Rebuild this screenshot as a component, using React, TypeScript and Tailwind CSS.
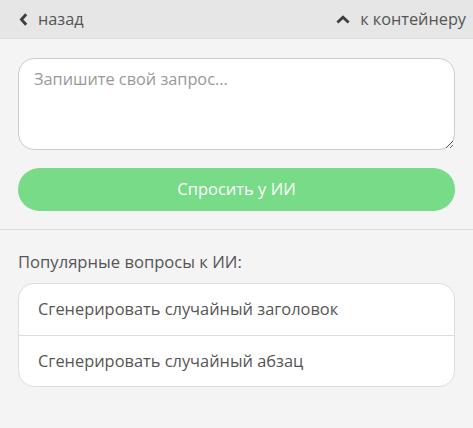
import React, { useState } from 'react';

const questions = ['Сгенерировать случайный заголовок', 'Сгенерировать случайный абзац'];

export default function App() {
  const [query, setQuery] = useState('');

  return (
    <div
      className="min-h-[428px] bg-[#f4f4f4] text-[#444]"
      style={{ fontFamily: '"Open Sans", "Noto Sans", sans-serif' }}
    >
      {/* Top bar */}
      <div className="flex h-[39px] items-center justify-between border-b border-[#dcdcdc] bg-[#e6e6e6] px-[19px] text-[16.3px] leading-[22px] text-[#555]">
        <button className="flex items-center gap-[10px]">
          <svg width="9" height="13" viewBox="0 0 9 13" fill="none">
            <path d="M7.2 1.2L2.4 6.5L7.2 11.8" stroke="#3e3e3e" strokeWidth="2.8" />
          </svg>
          <span>назад</span>
        </button>
        <button className="-mr-[12px] flex items-center gap-[10px]">
          <svg width="14" height="9" viewBox="0 0 14 9" fill="none">
            <path d="M1.4 7.6L7 2.2L12.6 7.6" stroke="#3e3e3e" strokeWidth="2.8" />
          </svg>
          <span>к контейнеру</span>
        </button>
      </div>

      {/* Ask form */}
      <div className="border-b border-[#dcdcdc] px-[18px] pt-[19px] pb-[18px]">
        <textarea
          value={query}
          onChange={e => setQuery(e.target.value)}
          placeholder="Запишите свой запрос..."
          className="block h-[92px] w-full resize-y rounded-[16px] border border-[#cccccc] bg-white px-[15px] py-[8px] text-[16.3px] leading-[24px] text-[#444] outline-none placeholder:text-[#999]"
        />
        <button className="mt-[18px] h-[43px] w-full rounded-full bg-[#77db88] text-[16.5px] text-white">
          Спросить у ИИ
        </button>
      </div>

      {/* Popular questions */}
      <div className="px-[18px] pt-[20px]">
        <div className="text-[16.6px] leading-[24px] text-[#555]">Популярные вопросы к ИИ:</div>
        <div className="mt-[9px] overflow-hidden rounded-[16px] border border-[#dddddd] bg-white">
          {questions.map((q, i) => (
            <button
              key={q}
              className={
                'flex h-[51px] w-full items-center px-[19px] text-left text-[16.4px] text-[#555]' +
                (i > 0 ? ' border-t border-[#dddddd]' : '')
              }
            >
              {q}
            </button>
          ))}
        </div>
      </div>
    </div>
  );
}
